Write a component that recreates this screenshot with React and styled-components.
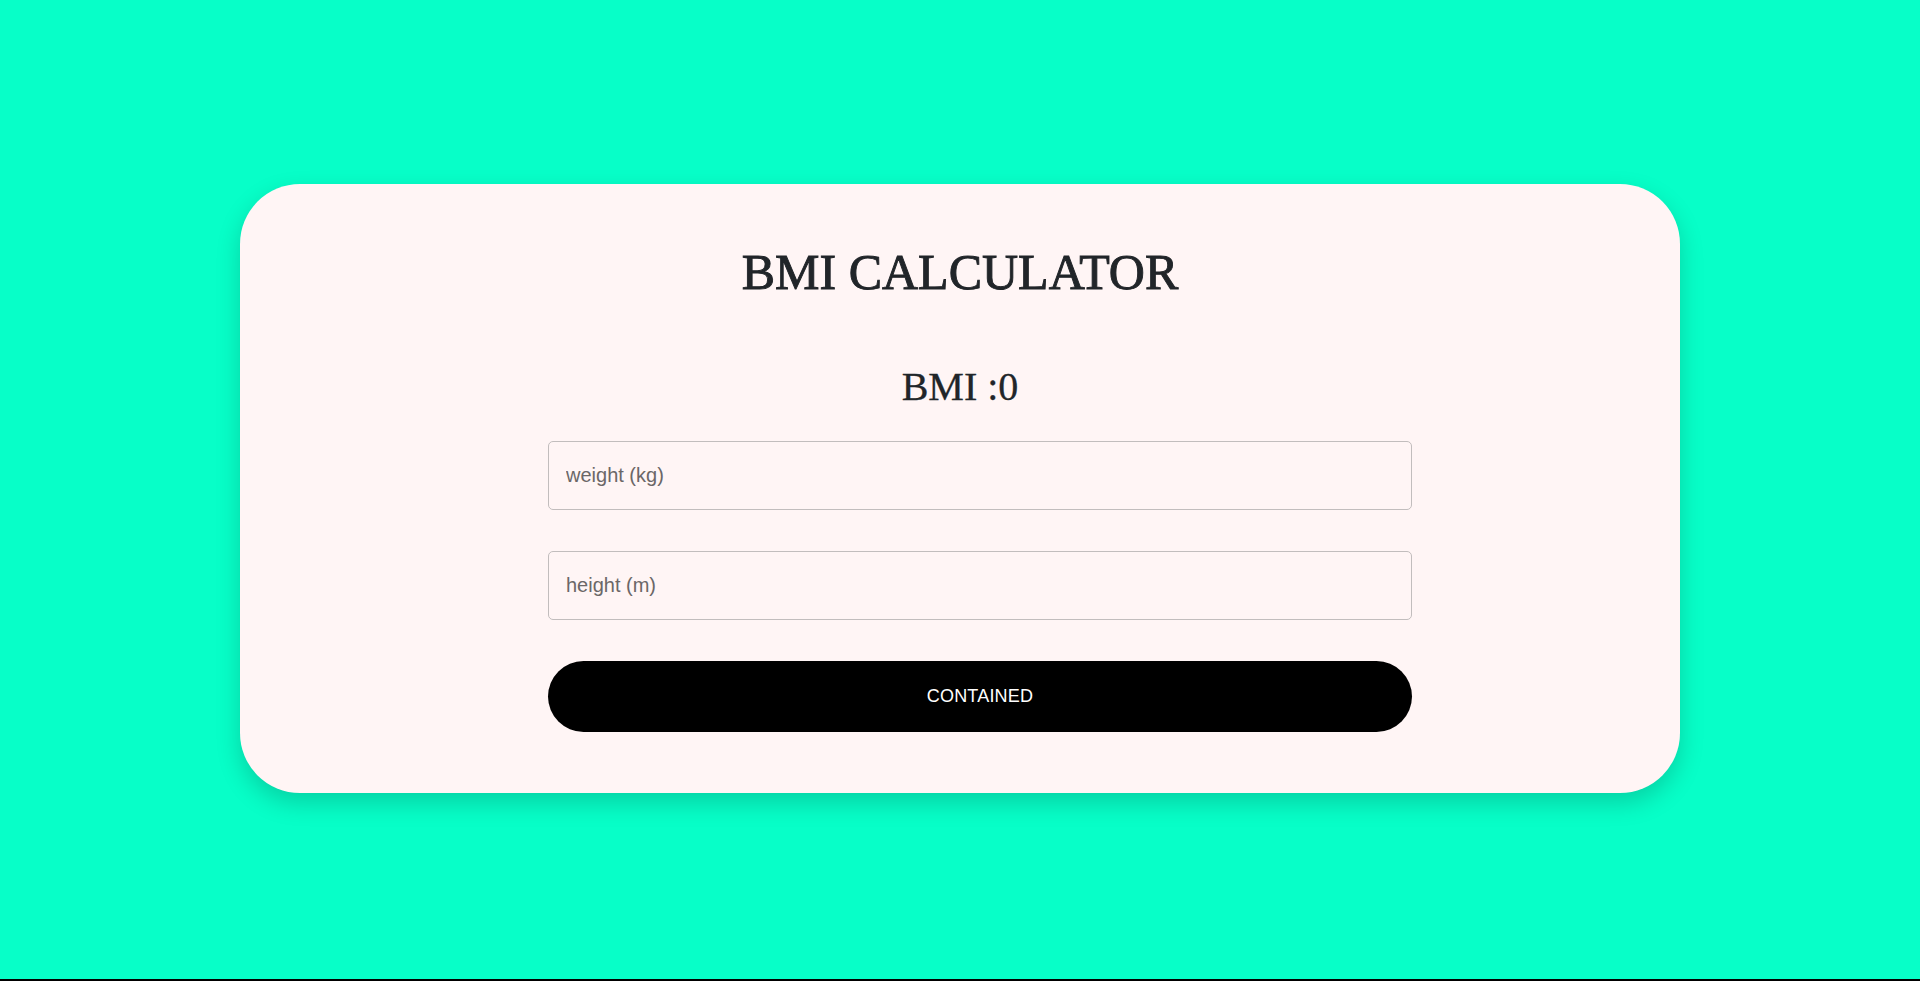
import styled, { createGlobalStyle } from "styled-components";

const GlobalStyle = createGlobalStyle`
  * { box-sizing: border-box; }
  html, body { margin: 0; padding: 0; }
  body { background: #07ffc8; }
`;

export default function App() {
  return (
    <>
      <GlobalStyle />
      <Page>
        <Card>
          <Title>BMI CALCULATOR</Title>
          <Result>BMI :0</Result>
          <Form>
            <Field placeholder="weight (kg)" />
            <Field placeholder="height (m)" />
            <SubmitButton type="button">Contained</SubmitButton>
          </Form>
        </Card>
      </Page>
    </>
  );
}

const Page = styled.div`
  height: 981px;
  padding-bottom: 2px;
  border-bottom: 2px solid #000;
  background: #07ffc8;
  display: flex;
  align-items: center;
  justify-content: center;
`;

const Card = styled.div`
  width: 1440px;
  height: 609px;
  background: #fff5f5;
  border-radius: 60px;
  box-shadow: 0 10px 24px rgba(0, 0, 0, 0.18);
  display: flex;
  flex-direction: column;
  align-items: center;
  padding-top: 58px;
`;

const Title = styled.h1`
  margin: 0;
  font-family: "Liberation Serif", "Times New Roman", serif;
  font-weight: 400;
  font-size: 50px;
  line-height: 60px;
  color: #212529;
  -webkit-text-stroke: 0.9px #212529;
`;

const Result = styled.div`
  margin-top: 61px;
  font-family: "Liberation Serif", "Times New Roman", serif;
  font-size: 40px;
  line-height: 48px;
  color: #212529;
  -webkit-text-stroke: 0.3px #212529;
`;

const Form = styled.div`
  width: 864px;
  margin-top: 30px;
  margin-left: 40px;
  display: flex;
  flex-direction: column;
  gap: 41px;
`;

const Field = styled.input`
  height: 69px;
  width: 100%;
  padding: 0 17px;
  border: 1px solid #c2bdbd;
  border-radius: 5px;
  background: transparent;
  font-family: "Liberation Sans", Arial, sans-serif;
  font-size: 20px;
  color: #333;
  outline: none;

  &::placeholder {
    color: #6b6767;
  }
`;

const SubmitButton = styled.button`
  height: 71px;
  width: 100%;
  border: none;
  border-radius: 36px;
  background: #000;
  color: #fff;
  font-family: "Liberation Sans", Arial, sans-serif;
  font-size: 18px;
  text-transform: uppercase;
  letter-spacing: 0.2px;
  cursor: pointer;
`;
